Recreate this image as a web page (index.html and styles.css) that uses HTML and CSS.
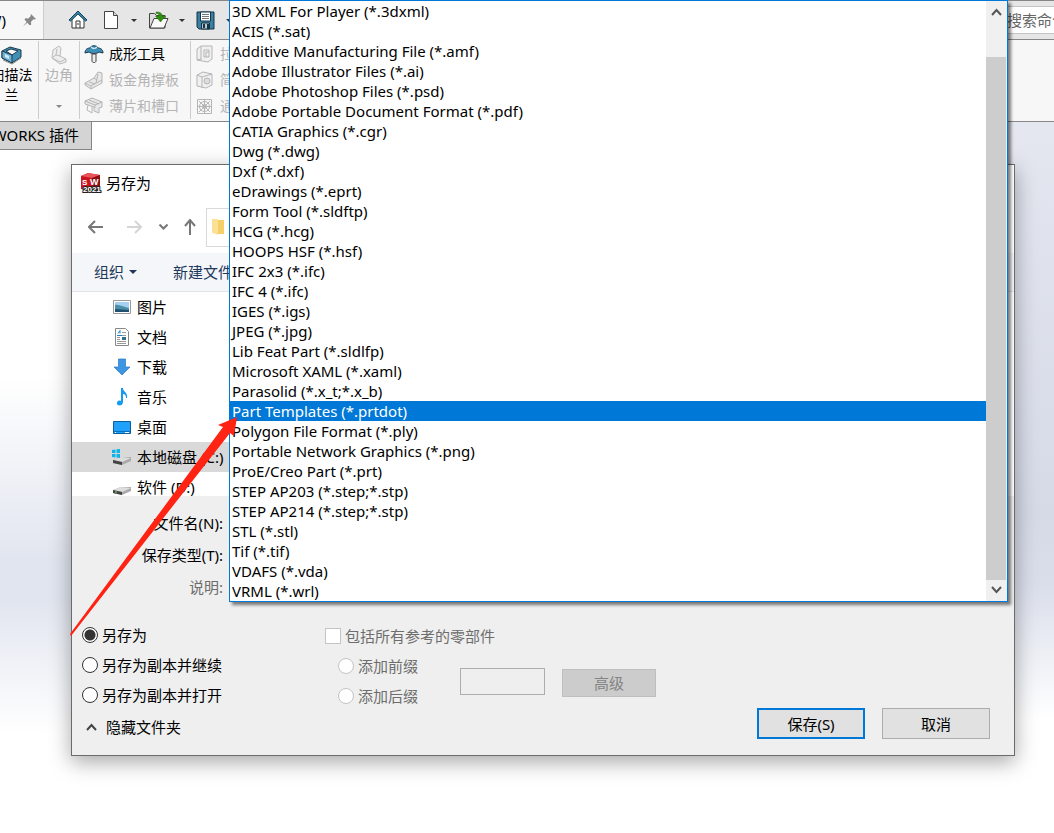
FILE: index.html
```
<!DOCTYPE html>
<html lang="zh-CN">

<head>
  <meta charset="UTF-8">
  <meta name="viewport" content="width=device-width, initial-scale=1.0">
  <title>另存为</title>
  <link rel="stylesheet" href="styles.css">
</head>

<body>
  <!-- 主窗口 -->
  <header class="topbar">
    <div class="menu-end">
      <span>W)</span>
      <svg width="15" height="15" viewBox="0 0 15 15"><path d="M9 1l5 5-1.500 .5-1-.3-2.500 2.500 .2 3-1.500 .5L5.300 9.800 1 13.500l3.600-4.400L2.500 6.500l.8-1.300 3 .2 2.500-2.500-.2-1z" fill="#888"/></svg>
    </div>
    <div class="quick">
      <svg width="20" height="20" viewBox="0 0 20 20"><path d="M4 9v9h12V9l-6-6z" fill="#fff" stroke="#333"/><path d="M8 18v-7h4v7M9 14h2" fill="none" stroke="#333"/><path d="M1 10l9-9 9 9-1.500 1L10 4l-7.500 7z" fill="#3b86ab" stroke="#143f57"/></svg>
      <svg class="file" width="16" height="20" viewBox="0 0 16 20"><path d="M1.500 1.500h9l4 4v13h-13z" fill="#fff" stroke="#444"/><path d="M10.500 1.500v4h4" fill="#ddd" stroke="#444"/></svg>
      <i class="drop"></i>
      <svg class="open" width="22" height="20" viewBox="0 0 22 20"><path d="M1.500 18V3.500h5l2 2H17V18z" fill="#ddd" stroke="#444"/><path d="M2 18L6 8.500h14L16 18z" fill="#fafafa" stroke="#444"/><path d="M8 2c4 0 6 1 6 4h3.500l-5 6-5-6H11c0-2-1-3-3-2.500z" fill="#2f8f12" stroke="#1c6b08" stroke-width=".5"/></svg>
      <i class="drop"></i>
      <svg class="disk" width="19" height="19" viewBox="0 0 19 19"><path d="M1 1h17v17H3l-2-2z" fill="#3b7fa4" stroke="#153547"/><path d="M4.500 1h10v9h-10z" fill="#fff" stroke="#153547"/><path d="M6 3.500h7M6 5.500h7M6 7.500h7" stroke="#777"/><path d="M5.500 12h8v6h-8z" fill="#b8c4ca" stroke="#153547"/><path d="M7 13h2v4H7zM11 13h2v5h-2z" fill="#153547"/></svg>
      <i class="drop"></i>
    </div>
    <input class="search" type="text" placeholder="搜索命令" aria-label="搜索命令">
  </header>

  <section class="ribbon">
    <div class="group sweep">
      <svg width="22" height="20" viewBox="0 0 22 20"><path d="M1 6l8-4 11 3v7l-9 6-10-5z" fill="#3f8fb7" stroke="#1c3a4a"/><path d="M5 6l5-2 7 2-6 4z" fill="#f7f7f7" stroke="#1c3a4a"/><path d="M1 6l10 4v8l-10-5z" fill="#6fb4d4" stroke="#1c3a4a"/><path d="M4 9l4 2v3l-4-2z" fill="#d5ecf6"/><path d="M2 15l9 4 9-6" fill="none" stroke="#888"/></svg>
      <span>扫描法<br>兰</span>
    </div>
    <div class="group corner off">
      <svg width="18" height="20" viewBox="0 0 18 20"><path d="M3 5l6-4 2 2-1 8 6 3v3l-6 2-8-6z" fill="#eee" stroke="#bbb"/><path d="M3 12l3-2 1-6M6 10l4 1M2 13l8 4 6-3" fill="none" stroke="#bbb"/></svg>
      <span>边角</span>
      <i class="drop"></i>
    </div>
    <div class="group tools">
      <div class="tool">
        <svg width="20" height="20" viewBox="0 0 20 20"><path d="M1 9c0-4 3-5 5-5 1-3 7-3 8 0 2 0 5 1 5 5l-4-1c-2 2-8 2-10 0z" fill="#3f8fb7" stroke="#16384a"/><path d="M7 3c2 2 4 2 6 0" fill="none" stroke="#c9e8f6" stroke-width="1.500"/><path d="M8 10h4v7c0 2-4 2-4 0z" fill="#eee" stroke="#444"/></svg>
        <span>成形工具</span>
      </div>
      <div class="tool off">
        <svg width="20" height="20" viewBox="0 0 20 20"><path d="M1 13L10 8l4-6 4 1v10l-11 6-6-4z" fill="#e8e8e8" stroke="#b5b5b5"/><path d="M1 13l6 3 5-3 2-9M7 16v3M5 12l6 2M12 13l6-3M10 8l3 2" fill="none" stroke="#b5b5b5"/></svg>
        <span>钣金角撑板</span>
      </div>
      <div class="tool off">
        <svg width="20" height="20" viewBox="0 0 20 20"><path d="M1 5l7-3 10 4v5l-3 1v5l-5-2v-4L1 8z" fill="#e8e8e8" stroke="#b5b5b5"/><path d="M1 5l10 4 7-3M11 9v3M4 9l-1 5 5 3V11M5 4l10 4" fill="none" stroke="#b5b5b5"/></svg>
        <span>薄片和槽口</span>
      </div>
    </div>
    <div class="group cuts">
      <div class="tool off">
        <svg width="17" height="18" viewBox="0 0 17 18"><path d="M1 4l4-3h11v13l-4 3-11-2z" fill="#f0f0f0" stroke="#b5b5b5"/><path d="M5 1v14M8 5h5v7H8zM10 7h3M10 7v5M1 15l4-1" fill="none" stroke="#b5b5b5"/></svg>
        <span>拉伸切除</span>
      </div>
      <div class="tool off">
        <svg width="17" height="18" viewBox="0 0 17 18"><path d="M1 4l6-3 9 2v11l-6 3-9-2z" fill="#f0f0f0" stroke="#b5b5b5"/><path d="M1 4l5 2v11M6 6l10-3" fill="none" stroke="#b5b5b5"/><circle cx="11" cy="10" r="3" fill="#ddd" stroke="#b5b5b5"/></svg>
        <span>简单直孔</span>
      </div>
      <div class="tool off">
        <svg width="17" height="18" viewBox="0 0 17 18"><path d="M1.500 2.500h14v14h-14zM8.500 2v15M1 9.500h15M3 4l11 11M14 4L3 15" fill="none" stroke="#b5b5b5"/><circle cx="8.500" cy="9.500" r="5" fill="none" stroke="#b5b5b5"/><circle cx="8.500" cy="9.500" r="2" fill="none" stroke="#b5b5b5"/></svg>
        <span>通风口</span>
      </div>
    </div>
  </section>

  <main class="canvas">
    <div class="tab">WORKS 插件</div>
  </main>

  <!-- 另存为 对话框 -->
  <div class="dialog" role="dialog" aria-labelledby="title">
    <div class="title">
      <svg width="22" height="22" viewBox="0 0 22 22"><path d="M1 4l7-3 12 2v12l-8 4L1 17z" fill="#c8141e"/><path d="M1 4l7-3 12 2-8 3z" fill="#e8555b"/><path d="M12 6l8-3v12l-8 4z" fill="#8e0c14"/><text x="2" y="13" font-size="8" class="logo">S</text><text x="10" y="13" font-size="9" class="logo">W</text><text x="3" y="20" font-size="8" class="logo year">2021</text></svg>
      <span id="title">另存为</span>
    </div>

    <div class="nav">
      <svg width="16" height="16" viewBox="0 0 16 16"><path d="M15 8H1M7 2L1 8l6 6" class="line"/></svg>
      <svg class="next" width="16" height="16" viewBox="0 0 16 16"><path d="M1 8h14M9 2l6 6-6 6" class="line"/></svg>
      <svg class="recent" width="9" height="6" viewBox="0 0 9 6"><path d="M.5 .5l4 4 4-4" class="line"/></svg>
      <svg class="up" width="12" height="16" viewBox="0 0 12 16"><path d="M6 16V1M1 7l5-6 5 6" class="line"/></svg>
      <div class="address">
        <svg width="14" height="18" viewBox="0 0 14 18"><path d="M6 2h7v14H6z" fill="#f5cf67"/><path d="M1 1h6v16l-5-2H1z" fill="#fbe196"/></svg>
      </div>
    </div>

    <div class="commands">
      <button class="plain">组织 <i class="drop"></i></button>
      <button class="plain">新建文件夹</button>
    </div>

    <ul class="tree">
      <li>
        <svg width="20" height="18" viewBox="0 0 20 18"><path d="M1.500 2.500h17v13h-17z" fill="#fff" stroke="#999"/><path d="M3 4h14v10H3z" fill="#a5d0f2"/><path d="M3 7c4-1 8 2 14 3v4H3z" fill="#4a8fa8"/><path d="M3 11l14 1v2H3z" fill="#21506e"/></svg>
        <span>图片</span>
      </li>
      <li>
        <svg width="20" height="18" viewBox="0 0 20 18"><path d="M3.500 .5h10l3 3v14h-13z" fill="#fff" stroke="#888"/><path d="M10 4.500h4M5 7.500h9M5 9.500h3M5 11.500h3M5 13.500h9M5 15.500h9" stroke="#999"/><path d="M6 5.500l2-3v3M5 7.500h5" stroke="#1e7fc2" fill="none"/><path d="M10 9h4v3h-4z" fill="#2f6f8f"/></svg>
        <span>文档</span>
      </li>
      <li>
        <svg width="20" height="18" viewBox="0 0 20 18"><path d="M6.500 1h7v8H18l-8 8-8-8h4.500z" fill="#3d96e4" stroke="#2a78c2" stroke-width=".7"/></svg>
        <span>下载</span>
      </li>
      <li>
        <svg width="20" height="18" viewBox="0 0 20 18"><path d="M9 0h2c0 4 5 4 4 10h-1c0-3-1-4-3-4v8c0 5-7 4-6 1 0-2 2-3 4-2z" fill="#159bf0"/></svg>
        <span>音乐</span>
      </li>
      <li>
        <svg width="20" height="18" viewBox="0 0 20 18"><path d="M1.500 3.500h17v12h-17z" fill="#1ea0fb" stroke="#0b5e9c"/><path d="M2 13.500h16" stroke="#0b6fbc"/><path d="M3 14.500h1M13 14.500h4" stroke="#fff"/></svg>
        <span>桌面</span>
      </li>
      <li class="current">
        <svg width="20" height="18" viewBox="0 0 20 18"><path d="M1 12l8-3h10v4l-9 4-9-2z" fill="#aaa"/><path d="M1 12l8-3 10 1-9 4z" fill="#ddd"/><path d="M1 12l9 2v3l-9-2z" fill="#444"/><path d="M0 2l3.500-.5V5H0zM4.500 1.300L8 1v4H4.500zM0 6h3.500v3.500L0 9zM4.500 6H8v4l-3.500-.5z" fill="#0cb4ea"/></svg>
        <span>本地磁盘 (C:)</span>
      </li>
      <li>
        <svg width="20" height="18" viewBox="0 0 20 18"><path d="M1 12l8-3h10v4l-9 4-9-2z" fill="#aaa"/><path d="M1 12l8-3 10 1-9 4z" fill="#ddd"/><path d="M1 12l9 2v3l-9-2z" fill="#444"/><path d="M3 14h2" stroke="#6d6"/></svg>
        <span>软件 (D:)</span>
      </li>
    </ul>

    <div class="fields">
      <label for="name">文件名(N):</label>
      <input id="name" type="text">
      <label for="type">保存类型(T):</label>
      <span></span>
      <label for="desc" class="dim">说明:</label>
      <input id="desc" type="text" disabled>
    </div>

    <div class="options">
      <div class="modes">
        <label><input type="radio" name="mode" checked>另存为</label>
        <label><input type="radio" name="mode">另存为副本并继续</label>
        <label><input type="radio" name="mode">另存为副本并打开</label>
        <button class="plain hide">
          <svg width="11" height="8" viewBox="0 0 11 8"><path d="M1 7l4.500-5L10 7" fill="none" stroke="#444" stroke-width="2"/></svg>
          隐藏文件夹
        </button>
      </div>
      <div class="refs dim">
        <label><input type="checkbox" disabled>包括所有参考的零部件</label>
        <label class="sub"><input type="radio" name="affix" disabled>添加前缀</label>
        <label class="sub"><input type="radio" name="affix" disabled>添加后缀</label>
      </div>
      <input class="affix" type="text" aria-label="前缀或后缀" disabled>
      <button class="advanced" disabled>高级</button>
      <div class="actions">
        <button class="btn primary">保存(S)</button>
        <button class="btn">取消</button>
      </div>
    </div>
  </div>

  <!-- 保存类型下拉列表 -->
  <div class="popup">
    <select id="type" size="30">
      <option>3D XML For Player (*.3dxml)</option>
      <option>ACIS (*.sat)</option>
      <option>Additive Manufacturing File (*.amf)</option>
      <option>Adobe Illustrator Files (*.ai)</option>
      <option>Adobe Photoshop Files (*.psd)</option>
      <option>Adobe Portable Document Format (*.pdf)</option>
      <option>CATIA Graphics (*.cgr)</option>
      <option>Dwg (*.dwg)</option>
      <option>Dxf (*.dxf)</option>
      <option>eDrawings (*.eprt)</option>
      <option>Form Tool (*.sldftp)</option>
      <option>HCG (*.hcg)</option>
      <option>HOOPS HSF (*.hsf)</option>
      <option>IFC 2x3 (*.ifc)</option>
      <option>IFC 4 (*.ifc)</option>
      <option>IGES (*.igs)</option>
      <option>JPEG (*.jpg)</option>
      <option>Lib Feat Part (*.sldlfp)</option>
      <option>Microsoft XAML (*.xaml)</option>
      <option>Parasolid (*.x_t;*.x_b)</option>
      <option selected>Part Templates (*.prtdot)</option>
      <option>Polygon File Format (*.ply)</option>
      <option>Portable Network Graphics (*.png)</option>
      <option>ProE/Creo Part (*.prt)</option>
      <option>STEP AP203 (*.step;*.stp)</option>
      <option>STEP AP214 (*.step;*.stp)</option>
      <option>STL (*.stl)</option>
      <option>Tif (*.tif)</option>
      <option>VDAFS (*.vda)</option>
      <option>VRML (*.wrl)</option>
    </select>
    <div class="scrollbar">
      <svg width="11" height="8" viewBox="0 0 11 8"><path d="M1 7l4.500-5L10 7" fill="none" stroke="#555" stroke-width="2"/></svg>
      <div class="thumb"></div>
      <svg width="11" height="8" viewBox="0 0 11 8"><path d="M1 1l4.500 5L10 1" fill="none" stroke="#555" stroke-width="2"/></svg>
    </div>
  </div>

  <svg class="arrow" width="170" height="222" viewBox="0 0 170 222"><path d="M1 218L154 11l-5-2 19-8-3 19-4-3L2 220z" fill="#ff2313"/></svg>
</body>

</html>
```

FILE: styles.css
```
* {
  box-sizing: border-box;
}

body {
  margin: 0;
  height: 100vh;
  overflow: hidden;
  display: flex;
  flex-direction: column;
  position: relative;
  background: #fff;
  color: #000;
  font: 15px/20px "Noto Sans", "Noto Sans CJK SC", sans-serif;
}

button,
input,
select {
  font: inherit;
  color: inherit;
  margin: 0;
}

svg {
  flex: none;
  display: block;
}

/* 小三角 */
.drop {
  border: 3px solid transparent;
  border-top: 3px solid #333;
  border-bottom: 0;
}

/* 顶部工具栏 */
.topbar {
  display: flex;
  align-items: center;
  height: 40px;
  flex: none;
  background: #e6e6e6;
  border-top: 1px solid #8a8688;
  border-bottom: 1px solid #8a8688;
}

.menu-end {
  display: flex;
  align-items: center;
  justify-content: flex-end;
  gap: 16px;
  width: 44px;
  height: 38px;
  padding-right: 6px;
  overflow: hidden;
  background: #f7f7f7;
  border-right: 1px solid #ccc;
}

.quick {
  display: flex;
  align-items: center;
  padding-left: 24px;
}

.file {
  margin: 0 12px 0 15px;
}

.open {
  margin: 0 9px 0 11px;
}

.disk {
  margin: 0 11px;
}

.search {
  width: 56px;
  height: 28px;
  margin-left: auto;
  padding: 0 0 0 8px;
  background: #fff;
  border: 1px solid #c4c4c4;
  border-right: 0;
}

.search::placeholder {
  color: #666;
}

/* 功能区 */
.ribbon {
  display: flex;
  height: 82px;
  flex: none;
  padding: 1px 0;
  background: #f7f7f7;
  border-bottom: 1px solid #8a8688;
  font-size: 14px;
}

.group {
  display: flex;
  flex-direction: column;
  height: 78px;
  border-right: 1px solid #ccc;
}

.group:last-child {
  border: 0;
}

.sweep {
  align-items: center;
  width: 52px;
  margin-left: -13px;
  padding: 4px 2px 0 0;
  white-space: nowrap;
  text-align: center;
}

.corner {
  align-items: center;
  width: 41px;
  padding-top: 4px;
}

.corner .drop {
  margin-top: 20px;
  border-top-color: #888;
}

.tools {
  width: 111px;
  padding-left: 4px;
}

.cuts {
  padding-left: 5px;
}

.tool {
  display: flex;
  align-items: center;
  gap: 5px;
  height: 26px;
}

.cuts .tool {
  gap: 7px;
}

.off {
  color: #b4b4b4;
}

.canvas {
  flex: 1;
  background:
    linear-gradient(#fff 36%, #e1e5ef 62%, #e1e5ef 67%, #fff 86%) left / 50% 100% no-repeat,
    linear-gradient(#e4e7f0, #d6dae7 55%, #dadeeb 65%, #fff 84%) right / 15% 100% no-repeat;
}

.tab {
  display: flex;
  align-items: center;
  justify-content: flex-end;
  width: 92px;
  height: 28px;
  padding: 0 12px 2px 0;
  overflow: hidden;
  white-space: nowrap;
  background: #d4d4d4;
  border: 1px solid #8a8688;
  border-width: 0 1px 1px 0;
}

/* 对话框 */
.dialog {
  position: absolute;
  top: 164px;
  left: 71px;
  right: 39px;
  background: #efefef;
  border: 1px solid #6b6b6b;
  box-shadow: 0 6px 20px rgba(0, 0, 0, .35);
}

.title {
  display: flex;
  align-items: center;
  gap: 4px;
  height: 38px;
  padding: 0 0 2px 8px;
  background: #fff;
}

.logo {
  font-family: "Liberation Sans", sans-serif;
  font-weight: bold;
  fill: #fff;
}

.year {
  stroke: #222;
  stroke-width: 2px;
  paint-order: stroke;
}

.nav {
  display: flex;
  align-items: center;
  height: 50px;
  padding: 0 16px 2px;
  background: #fff;
}

.line {
  fill: none;
  stroke: #777;
  stroke-width: 2px;
}

.next {
  margin-left: 22px;
  opacity: .3;
}

.recent {
  margin-left: 17px;
}

.up {
  margin: 0 10px 0 16px;
}

.address {
  display: flex;
  align-items: center;
  flex: 1;
  height: 39px;
  padding-left: 4px;
  border: 1px solid #d9d9d9;
}

.commands {
  display: flex;
  align-items: center;
  gap: 36px;
  height: 39px;
  padding-left: 22px;
  background: #f5f6f9;
  border-bottom: 1px solid #e2e4e8;
  color: #1e395b;
}

.plain {
  display: flex;
  align-items: center;
  gap: 5px;
  padding: 0;
  background: none;
  border: 0;
}

.plain .drop {
  border-width: 4px 4px 0;
  border-top-color: #1e395b;
}

.tree {
  height: 204px;
  margin: 0;
  padding: 0;
  overflow: hidden;
  list-style: none;
  background: #fff;
}

.tree li {
  display: flex;
  align-items: center;
  gap: 5px;
  width: 30%;
  height: 30px;
  padding-left: 40px;
}

.tree .current {
  background: #d9d9d9;
}

.fields {
  display: grid;
  grid-template-columns: 151px 1fr;
  align-items: center;
  gap: 5px 8px;
  padding: 13px 16px 20px 0;
}

.fields label {
  justify-self: end;
  white-space: nowrap;
}

.fields input,
.fields span {
  height: 27px;
}

.fields input {
  border: 1px solid #aaa;
}

.dim {
  color: #6d6d6d;
}

.options {
  display: flex;
  align-items: flex-start;
  padding: 0 24px 14px 10px;
}

.options label {
  display: flex;
  align-items: center;
  gap: 4px;
  height: 30px;
}

.modes {
  width: 243px;
}

.hide {
  gap: 9px;
  height: 28px;
  margin: 3px 0 0 4px;
}

.refs {
  display: flex;
  flex-direction: column;
  width: 135px;
  padding-top: 1px;
  white-space: nowrap;
}

.sub {
  padding-left: 13px;
}

input[type=radio],
input[type=checkbox] {
  appearance: none;
  flex: none;
  width: 16px;
  height: 16px;
  background: #fff;
  border: 1px solid #333;
}

input[type=radio] {
  border-radius: 50%;
}

input[type=radio]:checked {
  background: radial-gradient(circle, #333 5px, #fff 6px);
}

input[type=radio]:disabled,
input[type=checkbox]:disabled {
  border-color: #c4c4c4;
}

.affix {
  width: 85px;
  height: 27px;
  margin-top: 48px;
  background: #efefef;
  border: 1px solid #adadad;
}

.advanced {
  width: 94px;
  height: 28px;
  margin: 49px 0 0 17px;
  padding: 0;
  background: #ccc;
  border: 1px solid #bfbfbf;
  color: #838383;
}

.actions {
  display: flex;
  gap: 17px;
  margin: 88px 0 0 auto;
}

.btn {
  width: 108px;
  height: 31px;
  padding: 0;
  background: #e1e1e1;
  border: 1px solid #adadad;
}

.primary {
  border: 2px solid #0078d7;
}

/* 下拉列表 */
.popup {
  position: absolute;
  top: 0;
  left: 229px;
  right: 46px;
  display: flex;
  background: #fff;
  border: 1px solid #0078d7;
  box-shadow: 3px 3px 3px rgba(0, 0, 0, .5);
}

.popup select {
  flex: 1;
  height: 600px;
  padding: 0;
  overflow: hidden;
  background: #fff;
  border: 0;
  border-radius: 0;
  outline: 0;
}

.popup option {
  height: 20px;
  padding: 0 2px;
  line-height: 20px;
}

.popup option:checked {
  background: #0078d7 linear-gradient(#0078d7, #0078d7);
  color: #fff;
}

.scrollbar {
  display: flex;
  flex-direction: column;
  align-items: center;
  justify-content: space-between;
  width: 21px;
  padding: 7px 1px 7px 0;
  background: #f0f0f0;
}

.thumb {
  align-self: stretch;
  flex: 1;
  margin: 41px 0 6px;
  background: #cdcdcd;
}

.arrow {
  position: absolute;
  top: 416px;
  left: 69px;
  pointer-events: none;
}
```
